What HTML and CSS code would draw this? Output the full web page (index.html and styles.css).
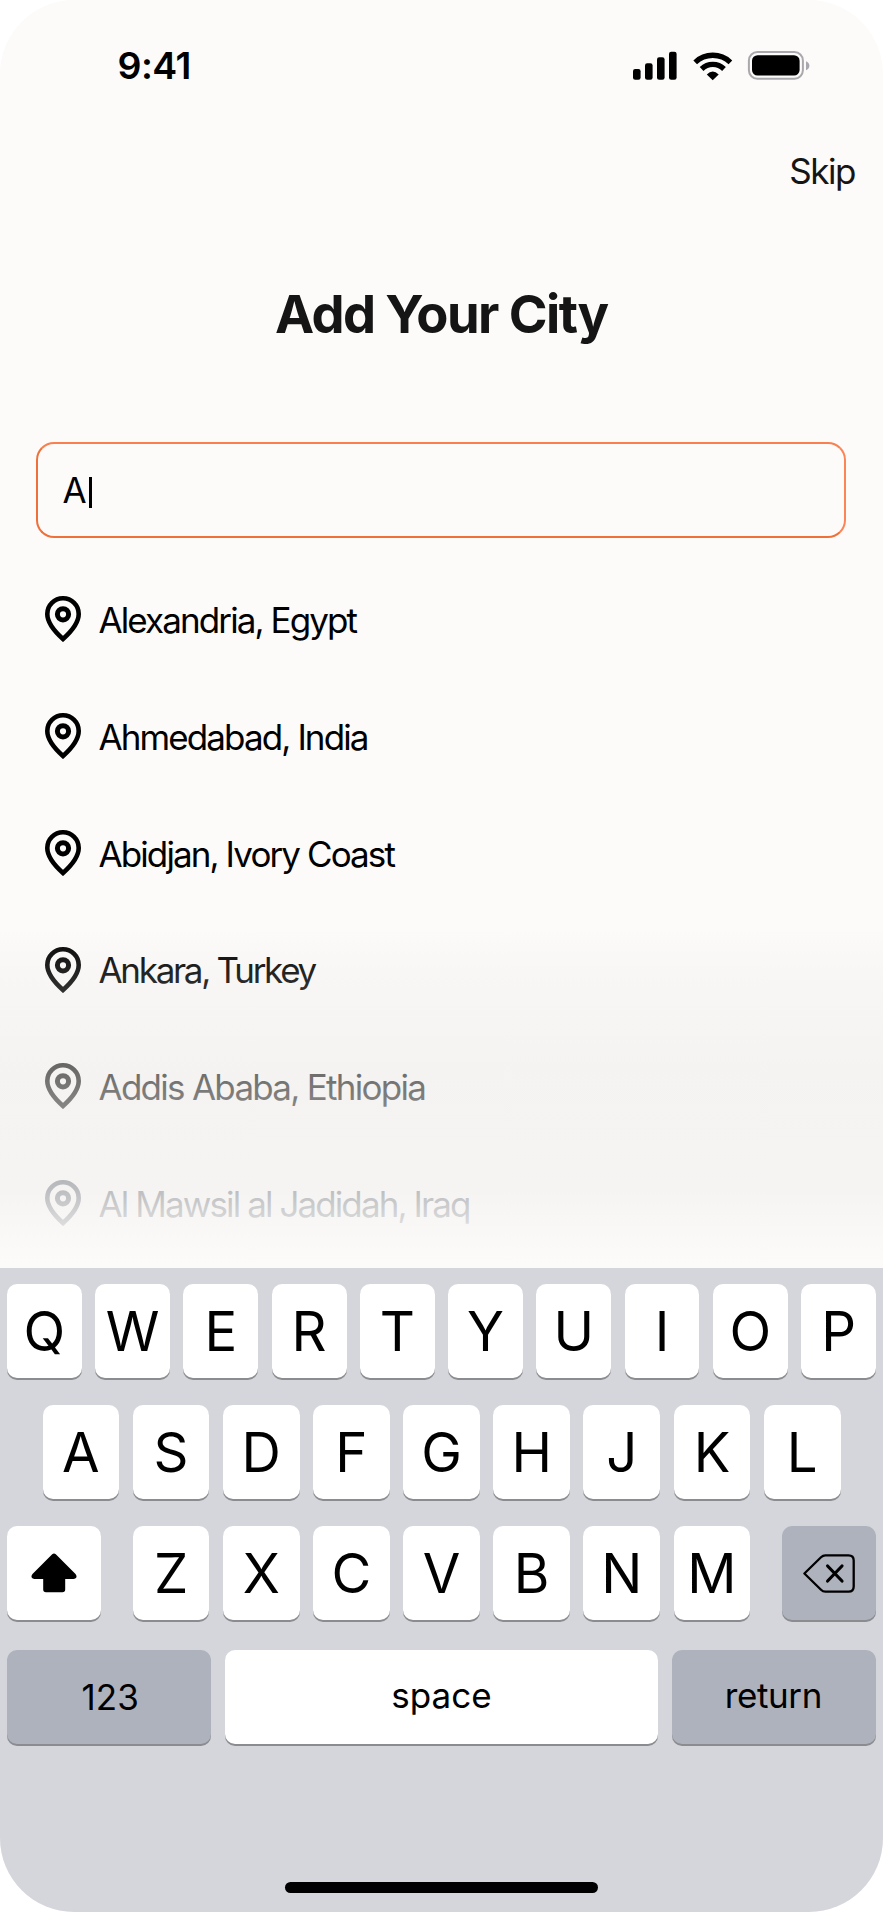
FILE: index.html
```html
<!DOCTYPE html>
<html lang="en">
<head>
<meta charset="utf-8">
<title>Add Your City</title>
<link rel="stylesheet" href="styles.css">
</head>
<body>
<svg class="defs" width="0" height="0">
  <symbol id="pin" viewBox="0 0 36 46">
    <path d="M18 2.300C9.300 2.300 2.300 9.300 2.300 18C2.300 27.500 9.500 35.400 18 43C26.500 35.400 33.700 27.500 33.700 18C33.700 9.300 26.700 2.300 18 2.300Z" fill="none" stroke="currentColor" stroke-width="4.600"/>
    <circle cx="18" cy="18.300" r="5.600" fill="none" stroke="currentColor" stroke-width="5"/>
  </symbol>
</svg>
<div class="phone">
  <main class="screen">
    <div class="status">
      <span class="time">9:41</span>
      <svg class="indicators" width="178" height="30" viewBox="632 51 178 30">
        <rect x="633" y="69" width="7.600" height="10.700" rx="2.200"/>
        <rect x="645" y="63.300" width="7.600" height="16.400" rx="2.200"/>
        <rect x="657" y="57.300" width="7.600" height="22.400" rx="2.200"/>
        <rect x="669" y="51.800" width="7.600" height="27.900" rx="2.200"/>
        <g fill="none" stroke="#000" stroke-width="5.300">
          <path d="M695.200 62.300A25.500 25.500 0 0 1 730.400 62.300"/>
          <path d="M701.600 69A16 16 0 0 1 724 69"/>
        </g>
        <path d="M706.800 74.400Q712.700 68.400 718.700 74.400L712.700 80.200Z"/>
        <rect x="748.900" y="52" width="54" height="26.800" rx="8.500" fill="none" stroke="#a9a9ad" stroke-width="2"/>
        <rect x="752" y="55.200" width="47.600" height="20.400" rx="5.600"/>
        <path d="M806 61.200C808 62 809.400 63.800 809.400 65.700C809.400 67.600 808 69.400 806 70.200Z" fill="#a9a9ad"/>
      </svg>
    </div>
    <div class="topbar"><span class="skip">Skip</span></div>
    <h1 class="title">Add Your City</h1>
    <div class="field"><span>A</span><span class="caret"></span></div>
    <ul class="cities">
      <li><svg class="pin"><use href="#pin"/></svg><span>Alexandria, Egypt</span></li>
      <li><svg class="pin"><use href="#pin"/></svg><span>Ahmedabad, India</span></li>
      <li><svg class="pin"><use href="#pin"/></svg><span>Abidjan, Ivory Coast</span></li>
      <li><svg class="pin"><use href="#pin"/></svg><span class="tight">Ankara, Turkey</span></li>
      <li><svg class="pin"><use href="#pin"/></svg><span class="loose">Addis Ababa, Ethiopia</span></li>
      <li class="last"><svg class="pin"><use href="#pin"/></svg><span>Al Mawsil al Jadidah, Iraq</span></li>
    </ul>
    <div class="fade"></div>
  </main>
  <section class="keyboard">
    <div class="row"><b>Q</b><b>W</b><b>E</b><b>R</b><b>T</b><b>Y</b><b>U</b><b>I</b><b>O</b><b>P</b></div>
    <div class="row middle"><b>A</b><b>S</b><b>D</b><b>F</b><b>G</b><b>H</b><b>J</b><b>K</b><b>L</b></div>
    <div class="row lower">
      <b class="side"><svg width="46" height="40" viewBox="0 0 46 40"><path d="M21.200 1.300Q23 -.3 24.800 1.300L44.500 21Q46 23 45.300 24.600Q44.600 25.900 42.500 25.900H34.200V36.500Q34.200 39.300 31.400 39.300H15Q12.200 39.300 12.200 36.500V25.900H3.500Q1.400 25.900 .7 24.600Q0 23 1.500 21Z"/></svg></b>
      <div class="letters"><b>Z</b><b>X</b><b>C</b><b>V</b><b>B</b><b>N</b><b>M</b></div>
      <b class="side gray"><svg width="52" height="39" viewBox="0 0 52 39" fill="none" stroke="#000" stroke-linecap="round" stroke-linejoin="round"><path d="M1.400 19.500L18 3.200Q19.900 1.300 22.400 1.300H45.500Q50.700 1.300 50.700 6.500V32.500Q50.700 37.700 45.500 37.700H22.400Q19.900 37.700 18 35.800Z" stroke-width="2.300"/><path d="M24.600 12L39 27M39 12L24.600 27" stroke-width="3.200"/></svg></b>
    </div>
    <div class="row bottom"><b class="wide gray numbers">123</b><b class="word">space</b><b class="wide gray word return">return</b></div>
    <div class="home"></div>
  </section>
</div>
</body>
</html>
```

FILE: styles.css
```css
* { box-sizing: border-box; }
body { margin: 0; background: #fff; font-family: Inter, "Liberation Sans", sans-serif; color: #000; }
.defs { position: absolute; }
.phone { width: 882.500px; height: 1911.500px; border-radius: 74px; overflow: hidden; background: #fcfbf9; }
.screen { position: relative; height: 1268px; display: flex; flex-direction: column; }
.status { height: 131px; padding: 0 73px 0 117.500px; display: flex; align-items: center; justify-content: space-between; }
.time { font-size: 37.500px; font-weight: 600; letter-spacing: -.6px; }
.indicators { display: block; }
.topbar { height: 80px; padding-right: 27.500px; display: flex; align-items: center; justify-content: flex-end; }
.skip { font-size: 35px; letter-spacing: -1.450px; color: #151515; }
.title { height: 206px; margin: 0; display: flex; align-items: center; justify-content: center; font-size: 52.500px; font-weight: 700; letter-spacing: -1.580px; color: #151515; }
.field { height: 96.500px; margin: 24.500px 36.500px 0 36px; padding-left: 24.500px; border: 2px solid; border-color: #f97f4e #fb8556 #f0703a #f0703a; border-radius: 18px; display: flex; align-items: center; font-size: 35px; }
.caret { width: 3px; height: 31px; margin: 6px 0 0 2px; background: #000; }
.cities { list-style: none; margin: 23.600px 0 0; padding: 0 0 0 45px; }
.cities li { height: 116.800px; display: flex; align-items: center; gap: 17.500px; font-size: 35px; letter-spacing: -1.900px; white-space: nowrap; }
.cities .tight { letter-spacing: -2.300px; }
.cities .loose { letter-spacing: -1.730px; }
.cities .last { color: #00081c; }
.pin { width: 36px; height: 46px; margin-top: -1.500px; }
.fade { position: absolute; left: 0; right: 0; top: 925px; height: 343px; background: linear-gradient(#dddcda00 4px, #e0dfdd17 27px, #e3e2e02f 57px, #ebeae872 142px, #eeedeb89 173px, #f3f2f0c6 265px, #f7f6f4db 291px, #fcfbf9 340px); }
.keyboard { height: 644px; background: #d5d6dc; padding: 15.500px 6.500px 0 7px; display: flex; flex-direction: column; }
.row { display: flex; height: 94.300px; margin-bottom: 27px; gap: 13.400px; }
b { flex: 1; font-weight: 400; font-size: 54.500px; background: #fff; border-radius: 10px; box-shadow: 0 2px 0 #8b8c8f; display: flex; align-items: center; justify-content: center; }
.middle { padding: 0 35.500px; }
.lower { gap: 31.500px; margin-bottom: 29.500px; }
.letters { flex: 1; display: flex; gap: 13.500px; }
.side { flex: none; width: 94.300px; }
.gray { background: #aeb2bd; }
.bottom b { font-size: 35px; }
.bottom .wide { flex: none; width: 204.300px; }
.bottom .numbers { padding-left: 2px; }
.bottom .word { padding-bottom: 4px; }
.bottom .return { letter-spacing: -.4px; padding-right: 1px; }
.home { width: 312.500px; height: 11px; border-radius: 6px; background: #000; margin: auto auto 19.500px 278px; }
```
